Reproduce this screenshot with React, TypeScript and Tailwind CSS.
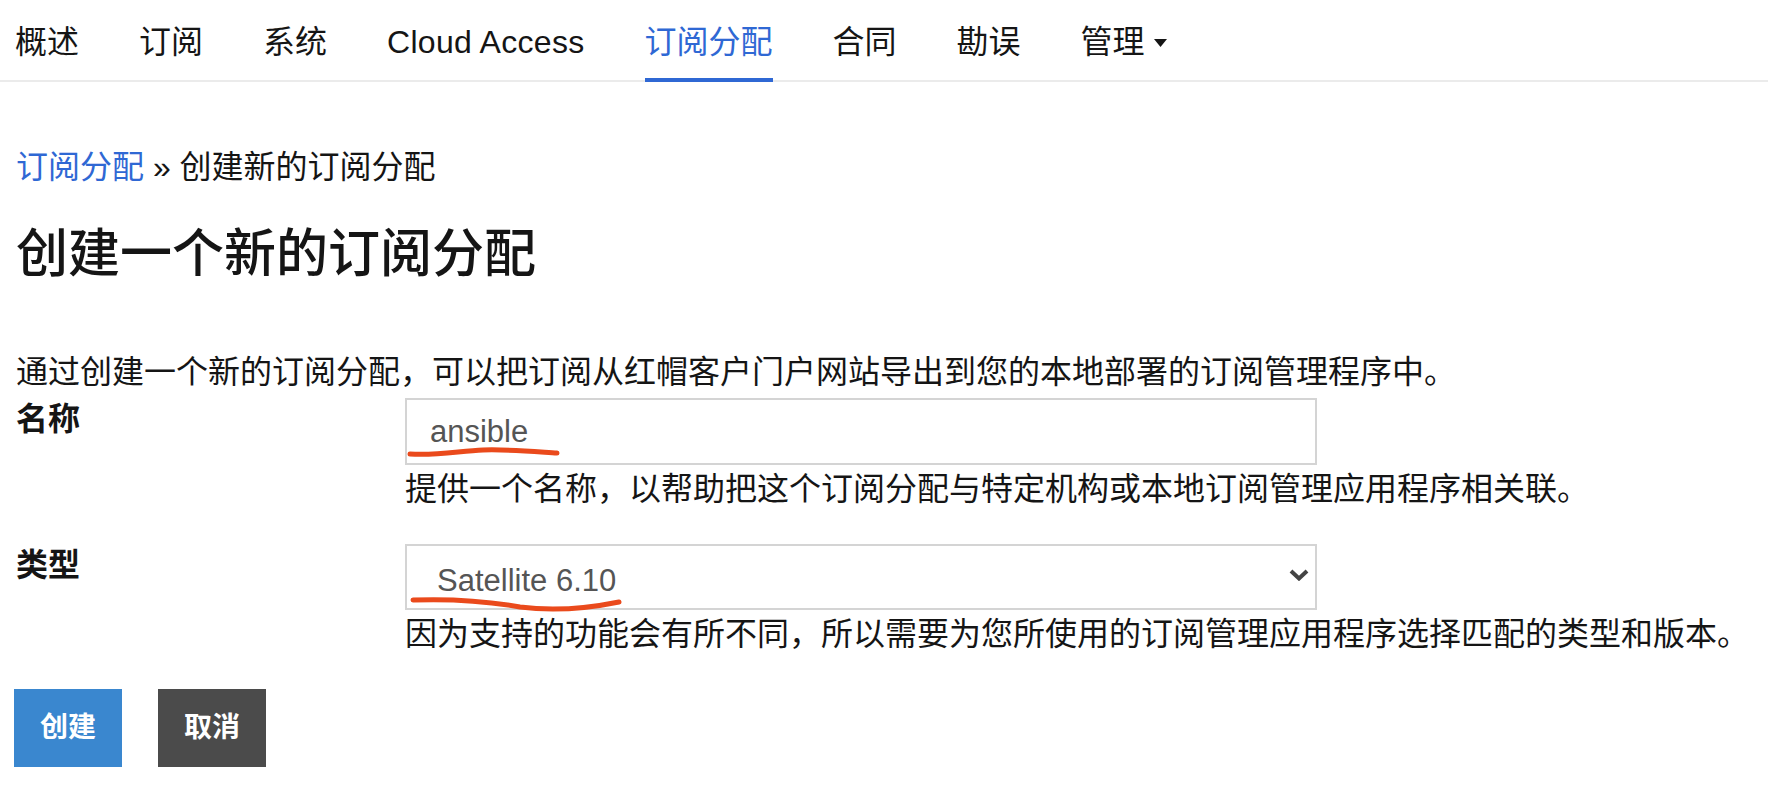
const navItems = [
  { label: "概述" },
  { label: "订阅" },
  { label: "系统" },
  { label: "Cloud Access", latin: true },
  { label: "订阅分配", active: true },
  { label: "合同" },
  { label: "勘误" },
  { label: "管理", dropdown: true },
];

export default function App() {
  return (
    <div className="relative min-h-[794px] w-[1768px] bg-white font-['Liberation_Sans','Noto_Sans_CJK_SC',sans-serif] text-[#151515]">
      {/* Top nav */}
      <nav className="flex h-[82px] items-stretch gap-[60px] border-b-2 border-[#ebebeb] px-[15px]">
        {navItems.map((item) => (
          <div
            key={item.label}
            className={`relative flex items-center pt-[4px] text-[32px] ${
              item.active ? "text-[#2f68d4]" : "text-[#151515]"
            } ${item.latin ? "tracking-[0.3px]" : ""}`}
          >
            {item.label}
            {item.dropdown && (
              <svg className="ml-[9px] mt-[2px]" width="13" height="8" viewBox="0 0 13 8">
                <path d="M0 0 L13 0 L6.5 8 Z" fill="#151515" />
              </svg>
            )}
            {item.active && (
              <span className="absolute bottom-[-2px] left-0 right-0 h-[4px] bg-[#2f68d4]" />
            )}
          </div>
        ))}
      </nav>

      <main className="px-4">
        {/* Breadcrumb */}
        <div className="mt-[61px] text-[32px] leading-[48px]">
          <a className="text-[#2f68d4]">订阅分配</a> » 创建新的订阅分配
        </div>

        <h1 className="mt-[32px] text-[52px] font-medium leading-[62px]">创建一个新的订阅分配</h1>

        <p className="mt-[63px] text-[32px] leading-[48px]">
          通过创建一个新的订阅分配，可以把订阅从红帽客户门户网站导出到您的本地部署的订阅管理程序中。
        </p>

        {/* Name row */}
        <div className="mt-[2px] flex">
          <label className="w-[389px] shrink-0 text-[32px] font-bold leading-[42px]">名称</label>
          <div className="flex flex-col">
            <input
              readOnly
              value="ansible"
              className="h-[67px] w-[912px] border-2 border-[#d4d4d4] bg-white pl-[23px] text-[31px] text-[#555] outline-none"
            />
            <span className="text-[32px] leading-[48px]">
              提供一个名称，以帮助把这个订阅分配与特定机构或本地订阅管理应用程序相关联。
            </span>
          </div>
        </div>

        {/* Type row */}
        <div className="mt-[31px] flex">
          <label className="w-[389px] shrink-0 text-[32px] font-bold leading-[42px]">类型</label>
          <div className="flex flex-col">
            <div
              role="combobox"
              className="flex h-[66px] w-[912px] items-center justify-between border-2 border-[#d4d4d4] bg-white pl-[30px] pr-[6px] pt-[8px] text-[31px] text-[#555]"
            >
              <span>Satellite 6.10</span>
              <svg className="-mt-[12px]" width="20" height="12" viewBox="0 0 20 12" fill="none">
                <path d="M2 2 L10 9.5 L18 2" stroke="#444" strokeWidth="4" />
              </svg>
            </div>
            <span className="text-[32px] leading-[48px]">
              因为支持的功能会有所不同，所以需要为您所使用的订阅管理应用程序选择匹配的类型和版本。
            </span>
          </div>
        </div>

        {/* Buttons */}
        <div className="mt-[31px] flex gap-[36px]">
          <button className="-ml-[2px] h-[78px] w-[108px] bg-[#3a87cf] text-[28px] font-bold text-white">
            创建
          </button>
          <button className="h-[78px] w-[108px] bg-[#4b4b4b] text-[28px] font-bold text-white">
            取消
          </button>
        </div>
      </main>

      {/* Hand-drawn red annotations */}
      <svg
        className="pointer-events-none absolute left-0 top-0"
        width="1768"
        height="794"
        viewBox="0 0 1768 794"
        fill="none"
      >
        <path
          d="M410 454 C 435 456, 460 451, 483 450 S 540 452, 557 453"
          stroke="#ea4a1c"
          strokeWidth="5"
          strokeLinecap="round"
        />
        <path
          d="M413 600 Q 470 598, 520 607 Q 565 613, 619 602"
          stroke="#ea4a1c"
          strokeWidth="5"
          strokeLinecap="round"
        />
      </svg>
    </div>
  );
}
